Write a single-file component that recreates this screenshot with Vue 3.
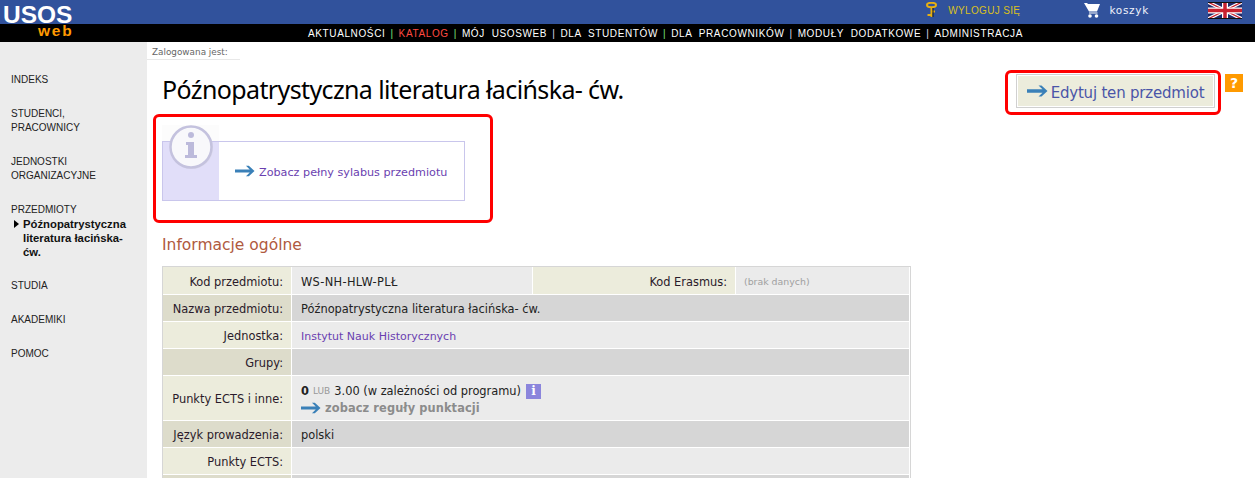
<script setup>
const menu = [
  { label: 'AKTUALNOŚCI', green: true },
  { label: 'KATALOG', active: true, green: true },
  { label: 'MÓJ  USOSWEB' },
  { label: 'DLA  STUDENTÓW', green: true },
  { label: 'DLA  PRACOWNIKÓW' },
  { label: 'MODUŁY  DODATKOWE' },
  { label: 'ADMINISTRACJA' },
]

const sidebar = [
  { label: ['INDEKS'] },
  { label: ['STUDENCI,', 'PRACOWNICY'] },
  { label: ['JEDNOSTKI', 'ORGANIZACYJNE'] },
  { label: ['PRZEDMIOTY'], current: true },
  { label: ['STUDIA'] },
  { label: ['AKADEMIKI'] },
  { label: ['POMOC'] },
]
</script>

<template>
  <div class="page">
    <header class="top">
      <div class="logo">
        <span class="usos">USOS</span>
        <span class="web">web</span>
      </div>
      <div class="top-links">
        <a class="logout">
          <svg class="key" width="11" height="16" viewBox="0 0 11 16">
            <ellipse cx="5.500" cy="3" rx="4.500" ry="2.200" fill="none" stroke="#e8b010" stroke-width="2" />
            <path d="M5.500 5v10M5.500 9.500H9M1.500 13H5.500" stroke="#e8b010" stroke-width="2" fill="none" />
            <path d="M7 6v9" stroke="#1a1a1a" stroke-width="1" fill="none" />
          </svg>
          <span>WYLOGUJ  SIĘ</span>
        </a>
        <a class="cart">
          <svg width="16" height="15" viewBox="0 0 16 15">
            <path d="M0 0H3L4 1H16L13 8.500H5Z" fill="#fff" />
            <path d="M5 9.500H13.500V10.500H5Z" fill="#fff" />
            <circle cx="6" cy="13" r="1.800" fill="#fff" />
            <circle cx="12.500" cy="13" r="1.800" fill="#fff" />
          </svg>
          <span>koszyk</span>
        </a>
        <svg class="flag" width="34" height="17" viewBox="0 0 34 17">
          <rect width="34" height="17" fill="#1f2a6b" />
          <path d="M0 0L34 17M34 0L0 17" stroke="#fff" stroke-width="3.500" />
          <path d="M0 0L34 17M34 0L0 17" stroke="#c8202f" stroke-width="1.200" />
          <path d="M17 0V17M0 8.500H34" stroke="#fff" stroke-width="6" />
          <path d="M17 0V17M0 8.500H34" stroke="#c8202f" stroke-width="3.500" />
          <path d="M0 .5H34M0 16.500H34" stroke="#111" stroke-width="1" />
        </svg>
      </div>
    </header>
    <nav class="menu">
      <template v-for="(item, i) in menu" :key="item.label">
        <a :class="{ active: item.active }">{{ item.label }}</a>
        <span v-if="i < menu.length - 1" class="sep" :class="{ green: item.green }">|</span>
      </template>
    </nav>

    <div class="body">
      <aside class="side">
        <div v-for="item in sidebar" :key="item.label[0]" class="side-item">
          <div v-for="line in item.label" :key="line">{{ line }}</div>
          <div v-if="item.current" class="side-current">
            <span class="tri"></span>
            <b>Późnopatrystyczna literatura łacińska- ćw.</b>
          </div>
        </div>
      </aside>

      <main class="main">
        <div class="logged">Zalogowana jest:</div>
        <div class="title-row">
          <h1>Późnopatrystyczna literatura łacińska- ćw.</h1>
          <div class="edit-wrap">
            <a class="edit-btn">
              <svg class="arrow" width="21" height="12" viewBox="0 0 21 12">
                <path d="M0 4.300H15.500L11.500 .5H14.500L20.500 6L14.500 11.500H11.500L15.500 7.700H0Z" fill="#3a80b8" />
              </svg>
              <span>Edytuj ten przedmiot</span>
            </a>
            <span class="help">?</span>
          </div>
        </div>

        <div class="info-box">
          <div class="info-side"></div>
          <svg class="info-icon" width="46" height="46" viewBox="0 0 46 46">
            <circle cx="24" cy="24" r="21" fill="#dcdaec" />
            <circle cx="23" cy="23" r="20.500" fill="#f8f8fb" stroke="#c4c2de" stroke-width="2.500" />
            <circle cx="23" cy="11" r="3" fill="#bcbadb" />
            <path d="M18 18h8v13h3v3H17v-3h3V21h-2z" fill="#bcbadb" />
          </svg>
          <a class="info-link">
            <svg class="arrow" width="20" height="12" viewBox="0 0 21 12">
              <path d="M0 4.300H15.500L11.500 .5H14.500L20.500 6L14.500 11.500H11.500L15.500 7.700H0Z" fill="#3a80b8" />
            </svg>
            <span>Zobacz pełny sylabus przedmiotu</span>
          </a>
        </div>

        <h2>Informacje ogólne</h2>

        <table class="data">
          <tbody>
            <tr>
              <th class="c1">Kod przedmiotu:</th>
              <td class="c2">WS-NH-HLW-PLŁ</td>
              <th class="c3">Kod Erasmus:</th>
              <td class="c4 nodata">(brak danych)</td>
            </tr>
            <tr class="dark">
              <th>Nazwa przedmiotu:</th>
              <td colspan="3">Późnopatrystyczna literatura łacińska- ćw.</td>
            </tr>
            <tr>
              <th>Jednostka:</th>
              <td colspan="3"><a class="plain-link">Instytut Nauk Historycznych</a></td>
            </tr>
            <tr class="dark">
              <th>Grupy:</th>
              <td colspan="3"></td>
            </tr>
            <tr class="tall">
              <th>Punkty ECTS i inne:</th>
              <td colspan="3">
                <div class="ects">
                  <b>0</b>
                  <span class="lub">LUB</span>
                  <span>3.00 (w zależności od programu)</span>
                  <span class="i-badge">i</span>
                </div>
                <a class="rules">
                  <svg class="arrow" width="20" height="12" viewBox="0 0 21 12">
                    <path d="M0 4.300H15.500L11.500 .5H14.500L20.500 6L14.500 11.500H11.500L15.500 7.700H0Z" fill="#3a80b8" />
                  </svg>
                  <span>zobacz reguły punktacji</span>
                </a>
              </td>
            </tr>
            <tr class="dark">
              <th>Język prowadzenia:</th>
              <td colspan="3">polski</td>
            </tr>
            <tr>
              <th>Punkty ECTS:</th>
              <td colspan="3"></td>
            </tr>
            <tr class="dark">
              <th></th>
              <td colspan="3"></td>
            </tr>
          </tbody>
        </table>
      </main>
    </div>

    <!-- czerwone ramki z zrzutu -->
    <div class="mark mark-edit"></div>
    <div class="mark mark-info"></div>
  </div>
</template>

<style>
html, body {
  margin: 0;
  overflow: hidden;
  background: #fff;
}
</style>

<style scoped>
.page {
  position: relative;
  width: 1255px;
  height: 478px;
  overflow: hidden;
  font-family: "DejaVu Sans", sans-serif;
  color: #000;
}

.top {
  height: 24px;
  background: #31529c;
  position: relative;
  display: flex;
  justify-content: flex-end;
}

.logo {
  position: absolute;
  left: 2px;
  top: 0;
  font-family: "Liberation Sans", sans-serif;
  font-weight: bold;
  z-index: 2;
}

.usos {
  position: absolute;
  left: 1px;
  top: 6px;
  font-size: 24.500px;
  line-height: 18px;
  color: #fff;
}

.web {
  position: absolute;
  left: 36px;
  top: 24px;
  font-size: 15.500px;
  line-height: 13px;
  letter-spacing: 1.800px;
  color: #ff9a00;
}

.top-links {
  display: flex;
  align-items: center;
  height: 20px;
}

.logout {
  display: flex;
  align-items: center;
  gap: 11px;
  font-family: "Liberation Sans", sans-serif;
  font-size: 10px;
  letter-spacing: 0.35px;
  color: #d9c020;
  white-space: pre;
  margin-right: 64px;
}

.cart {
  display: flex;
  align-items: center;
  gap: 9px;
  color: #eef1fa;
  margin-right: 59px;
}

.cart span {
  letter-spacing: 0.7px;
  font-size: 10.500px;
}

.flag {
  margin-right: 13px;
}

.menu {
  height: 18px;
  background: #000;
  color: #fff;
  display: flex;
  justify-content: center;
  align-items: center;
  padding-left: 76px;
  font-family: "Liberation Sans", sans-serif;
  font-size: 10px;
  letter-spacing: 0.62px;
  white-space: pre;
  box-sizing: border-box;
}

.menu .active {
  color: #ff4a40;
}

.sep {
  color: #dde;
  margin: 0 5px;
}

.sep.green {
  color: #7be07b;
}

.body {
  display: flex;
  align-items: stretch;
}

.side {
  width: 147px;
  height: 436px;
  flex: none;
  background: #ececec;
  box-sizing: border-box;
  padding: 31px 10px 0 11px;
  font-family: "Liberation Sans", sans-serif;
  font-size: 10px;
  line-height: 14px;
  color: #222;
}

.side-item {
  margin-bottom: 20px;
}

.side-current {
  position: relative;
  padding-left: 12px;
  font-size: 11.300px;
  line-height: 14px;
}

.side-current b {
  color: #111;
}

.tri {
  position: absolute;
  left: 3px;
  top: 3px;
  border-left: 5px solid #000;
  border-top: 4px solid transparent;
  border-bottom: 4px solid transparent;
}

.main {
  flex: 1;
  position: relative;
  min-width: 0;
  padding-left: 15px;
}

.logged {
  width: 88px;
  margin-left: -15px;
  padding: 3px 0 0 5px;
  font-size: 8.850px;
  line-height: 14px;
  height: 14px;
  border-bottom: 1px solid #e8e8e8;
  color: #666;
  white-space: nowrap;
  box-sizing: content-box;
}

.title-row {
  display: flex;
  justify-content: space-between;
  align-items: flex-start;
  height: 81px;
}

h1 {
  margin: 11px 0 0;
  font-size: 25px;
  line-height: 37px;
  letter-spacing: -0.62px;
  font-weight: normal;
  font-family: "Noto Sans", sans-serif;
  white-space: nowrap;
}

.edit-wrap {
  display: flex;
  align-items: flex-start;
  margin-right: 12px;
  margin-top: 15px;
}

.edit-btn {
  display: flex;
  align-items: center;
  gap: 3px;
  width: 197px;
  height: 32px;
  box-sizing: border-box;
  justify-content: center;
  background: #ececdc;
  border: 1px solid #fff;
  outline: 1px solid #d0d0d0;
  font-size: 15px;
  letter-spacing: -0.2px;
  color: #4a55a8;
  white-space: nowrap;
}

.edit-btn span {
  margin-top: 3px;
}

.help {
  width: 18px;
  height: 18px;
  margin-left: 11px;
  margin-top: -1px;
  background: #ff9a00;
  color: #fff;
  font-size: 14px;
  line-height: 18px;
  font-weight: bold;
  text-align: center;
}

.info-box {
  position: relative;
  width: 301px;
  height: 58px;
  border: 1px solid #c9c6ec;
  box-sizing: content-box;
  display: flex;
  align-items: center;
}

.info-side {
  position: relative;
  width: 56px;
  height: 100%;
  background: #e1def9;
}

.info-side::before {
  content: "";
  position: absolute;
  left: -1px;
  top: -17px;
  width: 57px;
  height: 16px;
  background: #fcfcfc;
}

.info-icon {
  position: absolute;
  left: 5px;
  top: -18px;
}

.info-link {
  display: flex;
  align-items: center;
  gap: 4px;
  margin-left: 16px;
  font-size: 11.200px;
  color: #6a3fb0;
  white-space: nowrap;
}

.info-link span {
  margin-top: 2px;
}

h2 {
  margin: 33px 0 0;
  font-size: 15.500px;
  line-height: 22px;
  font-weight: normal;
  color: #b05a40;
}

.data {
  margin-top: 10px;
  width: 749px;
  border: 1px solid #d6d6d6;
  border-collapse: separate;
  border-spacing: 0;
  table-layout: fixed;
  font-size: 11.400px;
}

.data th,
.data td {
  height: 27px;
  padding: 2px 9px 0;
  box-sizing: border-box;
  border: 1px solid #fff;
  border-width: 1px 1px 0 0;
  font-weight: normal;
}

.data tr:first-child th,
.data tr:first-child td {
  border-top: 0;
}

.data th {
  width: 129px;
  padding-right: 8px;
  text-align: right;
  background: #ececdc;
  color: #2a1a2a;
  white-space: nowrap;
}

.data td {
  background: #ebebeb;
  color: #222;
  white-space: nowrap;
}

.data .c2 {
  width: 241px;
  letter-spacing: 0.35px;
}

.data .c3 {
  width: 203px;
}

.data .dark th {
  background: #dddccb;
}

.data .dark td {
  background: #d6d6d6;
}

.data .tall th,
.data .tall td {
  height: 45px;
}

.data td.nodata {
  padding-left: 8px;
  color: #a0a0a0;
  font-size: 9.400px;
}

.plain-link {
  color: #6a3fb0;
  font-size: 11px;
}

.ects {
  display: flex;
  align-items: center;
  gap: 4px;
  white-space: pre;
}

.lub {
  font-size: 9px;
  color: #999;
}

.i-badge {
  display: inline-block;
  width: 15px;
  height: 15px;
  margin-left: 1px;
  background: #8b85dc;
  color: #fff;
  text-align: center;
  font-weight: bold;
  font-size: 12px;
  line-height: 15px;
  font-family: "DejaVu Serif", serif;
}

.rules {
  display: flex;
  align-items: center;
  gap: 4px;
  margin-top: 2px;
  font-weight: bold;
  letter-spacing: 0.1px;
  color: #8c8c8c;
}

.mark {
  position: absolute;
  box-sizing: border-box;
  border: 3px solid #f00;
  border-radius: 6px;
  pointer-events: none;
}

.mark-edit {
  left: 1005px;
  top: 70px;
  width: 216px;
  height: 45px;
}

.mark-info {
  left: 153px;
  top: 114px;
  width: 340px;
  height: 109px;
}
</style>
